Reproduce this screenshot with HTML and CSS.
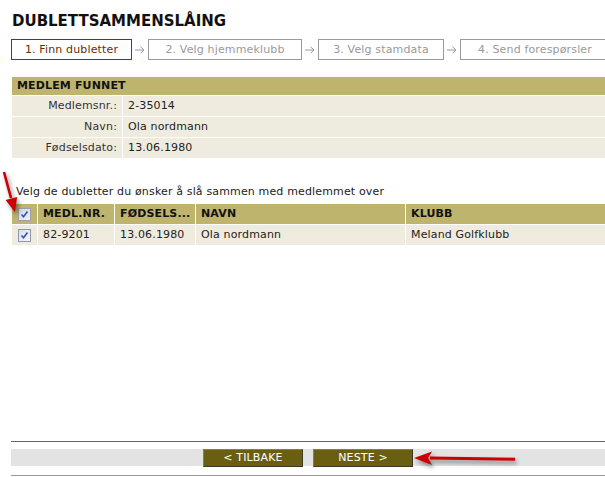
FILE: index.html
```html
<!DOCTYPE html>
<html lang="no">
<head>
<meta charset="utf-8">
<title>Dublettsammenslåing</title>
<link rel="stylesheet" href="styles.css">
</head>
<body>
<div class="page">
  <h1 class="title">DUBLETTSAMMENSLÅING</h1>

  <div class="steps">
    <div class="step step-active step-1">1. Finn dubletter</div>
    <span class="step-arrow"><svg width="10" height="8" viewBox="0 0 10 8"><path d="M0 4H9M5.5 0.8L9 4L5.5 7.2" fill="none" stroke="#999" stroke-width="1"/></svg></span>
    <div class="step step-2">2. Velg hjemmeklubb</div>
    <span class="step-arrow"><svg width="10" height="8" viewBox="0 0 10 8"><path d="M0 4H9M5.5 0.8L9 4L5.5 7.2" fill="none" stroke="#999" stroke-width="1"/></svg></span>
    <div class="step step-3">3. Velg stamdata</div>
    <span class="step-arrow"><svg width="10" height="8" viewBox="0 0 10 8"><path d="M0 4H9M5.5 0.8L9 4L5.5 7.2" fill="none" stroke="#999" stroke-width="1"/></svg></span>
    <div class="step step-4">4. Send forespørsler</div>
  </div>

  <div class="member">
    <div class="member-head">MEDLEM FUNNET</div>
    <div class="member-row"><div class="lbl">Medlemsnr.:</div><div class="val">2-35014</div></div>
    <div class="member-row"><div class="lbl">Navn:</div><div class="val">Ola nordmann</div></div>
    <div class="member-row"><div class="lbl">Fødselsdato:</div><div class="val">13.06.1980</div></div>
  </div>

  <p class="hint">Velg de dubletter du ønsker å slå sammen med medlemmet over</p>

  <div class="dup">
    <div class="cell head chk"><span class="cb cb-head"><svg width="9" height="9" viewBox="0 0 9 9"><path d="M1.5 4.5L3.5 6.8L7.5 1.5" fill="none" stroke="#2f56b8" stroke-width="1.6"/></svg></span></div>
    <div class="cell head">MEDL.NR.</div>
    <div class="cell head">FØDSELS...</div>
    <div class="cell head">NAVN</div>
    <div class="cell head">KLUBB</div>

    <div class="cell chk"><span class="cb"><svg width="9" height="9" viewBox="0 0 9 9"><path d="M1.5 4.5L3.5 6.8L7.5 1.5" fill="none" stroke="#2f56b8" stroke-width="1.6"/></svg></span></div>
    <div class="cell">82-9201</div>
    <div class="cell">13.06.1980</div>
    <div class="cell">Ola nordmann</div>
    <div class="cell">Meland Golfklubb</div>
  </div>

  <div class="footer">
    <div class="footer-bar">
      <button class="btn" type="button">&lt; TILBAKE</button>
      <button class="btn" type="button">NESTE &gt;</button>
    </div>
  </div>

  <svg class="red-arrow arrow-down" width="30" height="50" viewBox="0 0 30 50">
    <path d="M4 2L11 28" stroke="#cc0000" stroke-width="2.6" fill="none"/>
    <polygon points="15,42 17.1,26.9 5.5,30.1" fill="#cc0000"/>
  </svg>
  <svg class="red-arrow arrow-left" width="110" height="20" viewBox="0 0 110 20">
    <path d="M18 9L103 10.2" stroke="#cc0000" stroke-width="3" fill="none"/>
    <polygon points="2,9 20,2.5 16,9 20,16" fill="#cc0000"/>
  </svg>
</div>
</body>
</html>
```

FILE: styles.css
```css
* {
  box-sizing: border-box;
}

html, body {
  margin: 0;
  padding: 0;
  background: #ffffff;
  overflow: hidden;
}

body {
  font-family: "DejaVu Sans", Verdana, sans-serif;
  font-size: 11px;
  letter-spacing: 0.15px;
  color: #222222;
}

.page {
  position: relative;
  width: 605px;
  height: 477px;
  padding-left: 11px;
  overflow: hidden;
}

.title {
  margin: 11px 0 0 1px;
  font-size: 15px;
  line-height: 20px;
  font-weight: bold;
  color: #111111;
  letter-spacing: 0;
}

.steps {
  display: flex;
  align-items: center;
  margin-top: 8px;
  white-space: nowrap;
}

.step {
  flex: none;
  height: 21px;
  line-height: 19px;
  border: 1px solid #9a9a9a;
  color: #9a9a9a;
  text-align: center;
  font-size: 11px;
}

.step-active {
  border-color: #7a3300;
  color: #6b2c00;
}

.step-1 { width: 121px; }
.step-2 { width: 154px; }
.step-3 { width: 126px; }
.step-4 { width: 150px; }

.step-arrow {
  flex: none;
  width: 16px;
  display: flex;
  justify-content: center;
  padding-right: 1px;
}

.member {
  margin: 17px 0 0 1px;
  width: 600px;
  display: flex;
  flex-direction: column;
  gap: 1px;
}

.member-head {
  background: #beb46d;
  height: 18px;
  line-height: 18px;
  padding-left: 5px;
  font-weight: bold;
  color: #111111;
}

.member-row {
  display: flex;
  gap: 1px;
  height: 20px;
  line-height: 20px;
}

.member-row .lbl {
  width: 110px;
  background: #efecdf;
  text-align: right;
  padding-right: 5px;
  color: #333333;
}

.member-row .val {
  flex: 1;
  background: #efecdf;
  padding-left: 5px;
  color: #222222;
}

.hint {
  margin: 27px 0 0 5px;
  line-height: 14px;
  color: #222222;
}

.dup {
  margin: 5px 0 0 1px;
  width: 600px;
  display: grid;
  grid-template-columns: 25px 76px 80px 209px 1fr;
  grid-auto-rows: 20px;
  gap: 1px;
}

.cell {
  background: #efecdf;
  line-height: 20px;
  padding-left: 5px;
  white-space: nowrap;
  overflow: hidden;
}

.cell.head {
  background: #beb46d;
  font-weight: bold;
  color: #111111;
}

.cell.chk {
  padding-left: 0;
  display: flex;
  align-items: center;
  justify-content: center;
}

.cb {
  width: 13px;
  height: 13px;
  border: 1px solid #8b98ad;
  background: linear-gradient(135deg, #dcdde2 0%, #f7f7f9 100%);
  display: flex;
  align-items: center;
  justify-content: center;
}

.cb-head {
  border-color: #9aa0aa;
  background: linear-gradient(135deg, #d5d6dc 0%, #eef0f4 100%);
}

.footer {
  margin-top: 196px;
  border-top: 1px solid #666666;
  border-bottom: 1px solid #999999;
  width: 600px;
  padding: 7px 0 9px 0;
}

.footer-bar {
  background: #e3e3e3;
  height: 17px;
  display: flex;
  justify-content: center;
  gap: 10px;
  padding-right: 6px;
}

.btn {
  width: 100px;
  height: 18px;
  margin: 0;
  padding: 0;
  background: #6a5f10;
  color: #ffffff;
  border: 1px solid #3a3a2a;
  border-top-color: #8a7f40;
  border-left-color: #8a7f40;
  font-family: "DejaVu Sans", Verdana, sans-serif;
  font-size: 11px;
  letter-spacing: 0.15px;
  line-height: 16px;
  text-align: center;
}

.red-arrow {
  position: absolute;
  filter: drop-shadow(2px 3px 2px rgba(0, 0, 0, 0.45));
}

.arrow-down {
  left: 0;
  top: 170px;
}

.arrow-left {
  left: 412px;
  top: 449px;
}
```
